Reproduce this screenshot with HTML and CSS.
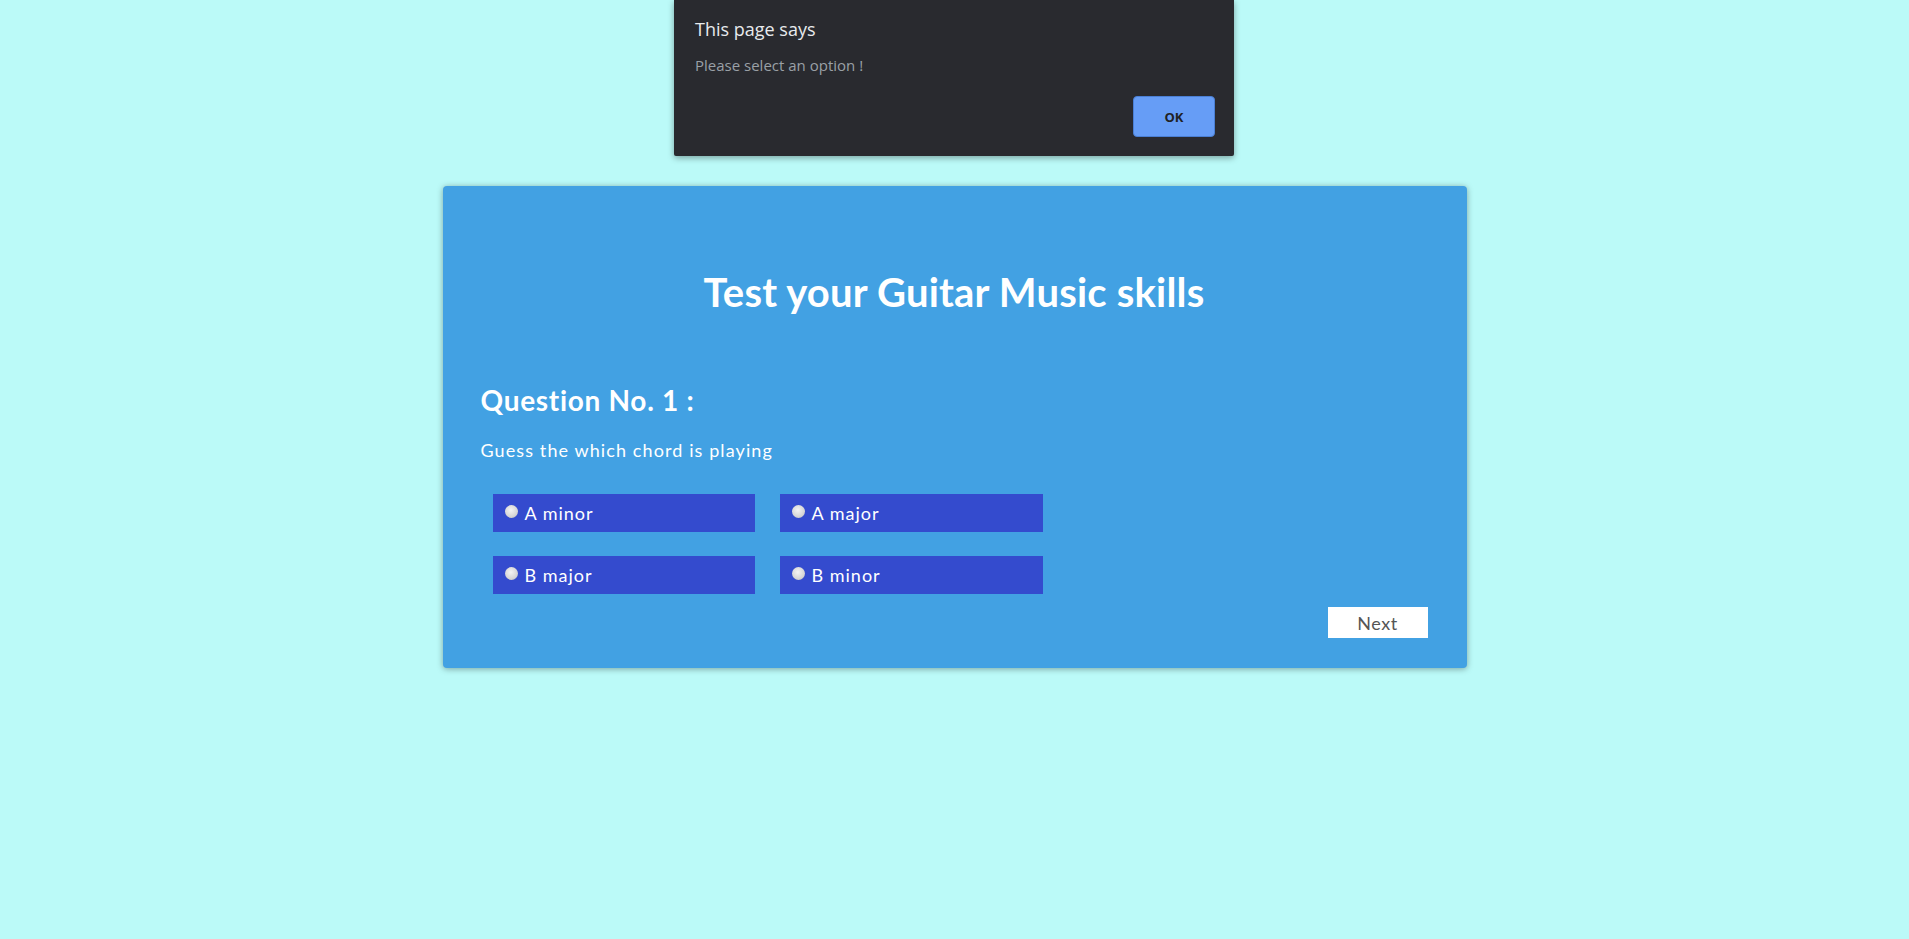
FILE: index.html
```html
<!DOCTYPE html>
<html lang="en">
<head>
<meta charset="utf-8">
<title>Guitar Quiz</title>
<link rel="stylesheet" href="styles.css">
</head>
<body>
<div class="dialog">
  <div class="dialog-title">This page says</div>
  <div class="dialog-msg">Please select an option !</div>
  <div class="dialog-actions"><button class="ok-btn">OK</button></div>
</div>
<main class="card">
  <h1 class="title">Test your Guitar Music skills</h1>
  <h2 class="question">Question No. 1 :</h2>
  <p class="prompt">Guess the which chord is playing</p>
  <div class="options">
    <label class="option"><span class="radio"></span>A minor</label>
    <label class="option"><span class="radio"></span>A major</label>
    <label class="option"><span class="radio"></span>B major</label>
    <label class="option"><span class="radio"></span>B minor</label>
  </div>
  <div class="actions"><button class="next-btn">Next</button></div>
</main>
</body>
</html>
```
FILE: styles.css
```css
html, body {
  margin: 0;
  padding: 0;
}
body {
  background: #bbfaf8;
  font-family: "Lato", "Liberation Sans", sans-serif;
  min-height: 939px;
}
.dialog {
  position: absolute;
  top: 0;
  left: 674px;
  width: 560px;
  height: 156px;
  box-sizing: border-box;
  background: #292a2f;
  padding: 18px 19px 19px 21px;
  box-shadow: 0 2px 6px rgba(0,0,0,0.35);
  border-radius: 0 0 2px 2px;
  font-family: "Open Sans", "Noto Sans", sans-serif;
  display: flex;
  flex-direction: column;
}
.dialog-title {
  color: #e8eaed;
  font-size: 18px;
  line-height: 22px;
}
.dialog-msg {
  color: #9aa0a6;
  font-size: 15px;
  line-height: 20px;
  margin-top: 15px;
}
.dialog-actions {
  margin-top: auto;
  display: flex;
  justify-content: flex-end;
}
.ok-btn {
  width: 82px;
  height: 41px;
  background: #669df6;
  border: 1px solid #4a7fd4;
  border-radius: 4px;
  color: #202124;
  font-family: "Open Sans", "Noto Sans", sans-serif;
  font-weight: 700;
  font-size: 13px;
}
.card {
  width: 1024px;
  margin: 186px auto 0;
  box-sizing: border-box;
  background: #42a1e3;
  border-radius: 4px;
  box-shadow: 0 1px 6px rgba(0,0,0,0.35);
  padding: 40px 39px 30px 38px;
  color: #ffffff;
}
.title {
  margin: 41px 0 0;
  font-size: 40px;
  line-height: 50px;
  font-weight: 700;
  letter-spacing: 0.2px;
  text-align: center;
}
.question {
  margin: 66px 0 0;
  font-size: 28px;
  line-height: 34px;
  font-weight: 700;
  letter-spacing: 0.7px;
}
.prompt {
  margin: 21px 0 0;
  font-size: 18px;
  line-height: 24px;
  letter-spacing: 1.1px;
}
.options {
  margin: 32px 0 0 12px;
  display: grid;
  grid-template-columns: 262px 263px;
  grid-auto-rows: 38px;
  column-gap: 25px;
  row-gap: 24px;
}
.option {
  background: #344bce;
  display: flex;
  align-items: center;
  padding-left: 12px;
  font-size: 18px;
  letter-spacing: 1px;
  color: #ffffff;
}
.radio {
  width: 13px;
  height: 13px;
  border-radius: 50%;
  background: radial-gradient(circle at 45% 40%, #f4f4f4 0%, #d6d6d6 60%, #b8b8b8 100%);
  margin-right: 7px;
  position: relative;
  top: -2px;
}
.actions {
  margin-top: 13px;
  display: flex;
  justify-content: flex-end;
}
.next-btn {
  width: 100px;
  height: 31px;
  background: #ffffff;
  border: none;
  color: #555555;
  font-family: "Lato", "Liberation Sans", sans-serif;
  font-size: 18px;
  letter-spacing: 0.5px;
  padding: 0;
}
```
